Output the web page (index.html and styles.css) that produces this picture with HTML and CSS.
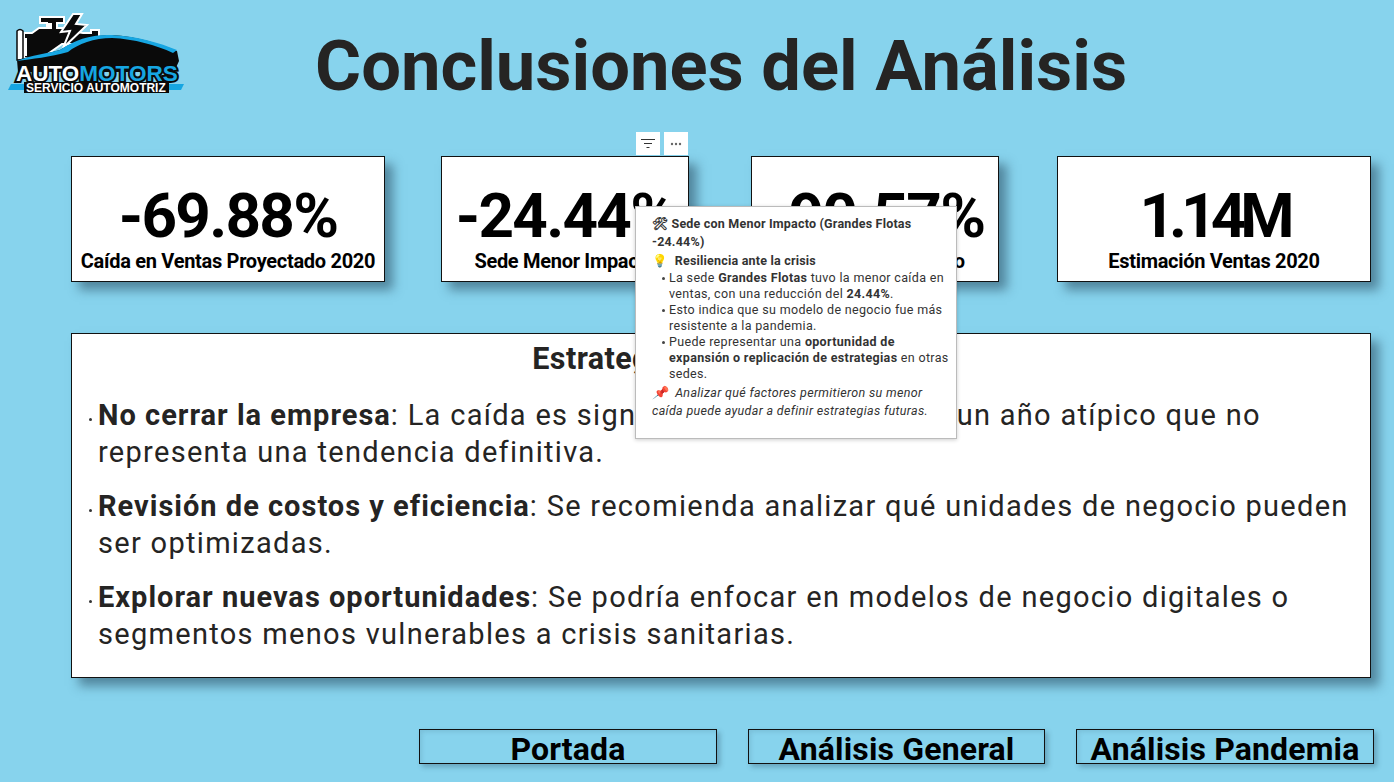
FILE: index.html
```html
<!DOCTYPE html>
<html>
<head>
    <meta charset="UTF-8">
    <title>Conclusiones del Análisis</title>
    <link rel="stylesheet" href="styles.css">
</head>
<body>
<div class="page">
    <header class="top">
        <svg class="logo" viewBox="0 0 200 100" width="200" height="100">
            <!-- engine -->
            <path d="M24 58V33h8l7-5h8v-5h-7v-6h24v6h-7v5h10l4 4h6l6 1h8v-3h8v14H62L42 58z" fill="#0a0a0a" stroke="#fff" stroke-width="2"/>
            <path d="M17 60V31q3-3 6 0v29z" fill="#fff" stroke="#0a0a0a" stroke-width="1.5"/>
            <path d="M47 23h5v6h-5zM24 38h3v18h-3z" fill="#fff"/>
            <path d="M73 14h9l-6 10 11 1-24 23 7-17-9 1z" fill="#0a0a0a" stroke="#fff" stroke-width="2"/>
            <!-- car -->
            <path d="M17 60C34 55 50 53 60 50C76 40 92 35 112 35C136 36 160 44 177 51L179 61L174 72H18z" fill="#0a0a0a"/>
            <path d="M17 61C30 55 50 53 60 50C76 39 92 34 112 35C136 36 160 43 177 50L173 53C156 45 134 39 112 38C94 38 78 44 68 52C50 57 32 59 17 61z" fill="#16a6e2"/>
            <text class="logo-auto" x="16" y="81" stroke="#0a0a0a" stroke-width="4" paint-order="stroke">AUTO<tspan fill="#16a6e2">MOTORS</tspan></text>
            <path d="M8 90l3-6h173l-3 6z" fill="#16a6e2"/>
            <rect x="24" y="82" width="145" height="11" fill="#0a0a0a"/>
            <text class="logo-sub" x="26" y="92">SERVICIO AUTOMOTRIZ</text>
        </svg>
        <h1 class="title">Conclusiones del Análisis</h1>
    </header>

    <section class="kpis">
        <div class="card card-wide">
            <div class="num">-69.88%</div>
            <div class="lbl">Caída en Ventas Proyectado 2020</div>
        </div>
        <div class="card">
            <div class="num">-24.44%</div>
            <div class="lbl">Sede Menor Impacto</div>
        </div>
        <div class="card">
            <div class="num">-90.57%</div>
            <div class="lbl">Sede Mayor Impacto</div>
        </div>
        <div class="card card-wide">
            <div class="num num-tight">1.14M</div>
            <div class="lbl">Estimación Ventas 2020</div>
        </div>
    </section>

    <section class="panel">
        <h2>Estrategias Recomendadas</h2>
        <ul>
            <li><b>No cerrar la empresa</b>: La caída es significativa, pero 2020 es un año atípico que no representa una tendencia definitiva.</li>
            <li><b>Revisión de costos y eficiencia</b>: Se recomienda analizar qué unidades de negocio pueden ser optimizadas.</li>
            <li><b>Explorar nuevas oportunidades</b>: Se podría enfocar en modelos de negocio digitales o segmentos menos vulnerables a crisis sanitarias.</li>
        </ul>
    </section>

    <nav class="nav">
        <div class="btn">Portada</div>
        <div class="btn">Análisis General</div>
        <div class="btn">Análisis Pandemia</div>
    </nav>

    <!-- visual header + tooltip sit over the cards -->
    <div class="vis-tools">
        <span class="tool">
            <svg width="14" height="10" viewBox="0 0 14 10"><path d="M0 .5h14M3 4.5h8M5.5 8.5h3" stroke="#333" fill="none"/></svg>
        </span>
        <span class="tool">
            <svg width="12" height="4" viewBox="0 0 12 4"><circle cx="2" cy="2" r="1.2" fill="#666"/><circle cx="6" cy="2" r="1.2" fill="#666"/><circle cx="10" cy="2" r="1.2" fill="#666"/></svg>
        </span>
    </div>
    <div class="tip">
        <p class="tip-b">🛠 Sede con Menor Impacto (Grandes Flotas -24.44%)</p>
        <p class="tip-b tip-h">💡&nbsp; Resiliencia ante la crisis</p>
        <ul>
            <li>La sede <b>Grandes Flotas</b> tuvo la menor caída en ventas, con una reducción del <b>24.44%</b>.</li>
            <li>Esto indica que su modelo de negocio fue más resistente a la pandemia.</li>
            <li>Puede representar una <b>oportunidad de expansión o replicación de estrategias</b> en otras sedes.</li>
        </ul>
        <p class="tip-i">📌&nbsp; Analizar qué factores permitieron su menor caída puede ayudar a definir estrategias futuras.</p>
    </div>
</div>
</body>
</html>
```

FILE: styles.css
```css
* {
    box-sizing: border-box;
}

body {
    margin: 0;
    background: #87d3ed;
    font-family: Roboto, "Liberation Sans", sans-serif;
    color: #222;
}

.page {
    position: relative;
    width: 1394px;
    height: 782px;
    overflow: hidden;
}

.top {
    display: flex;
    height: 156px;
}

.logo {
    flex: none;
}

.logo-auto {
    font: 700 22.5px "Liberation Sans", sans-serif;
    fill: #fff;
}

.logo-sub {
    font: 700 12px "Liberation Sans", sans-serif;
    fill: #fff;
}

.title {
    margin: 24px 0 0 115px;
    font-size: 70.5px;
    line-height: 84px;
    font-weight: 700;
    color: #252423;
    white-space: nowrap;
}

.kpis {
    display: flex;
    height: 126px;
    margin-left: 71px;
}

.card {
    flex: none;
    width: 248px;
    height: 126px;
    background: #fff;
    border: 1px solid #111;
    box-shadow: 8px 8px 10px rgba(30, 60, 80, 0.5);
    text-align: center;
    color: #000;
}

.card-wide {
    width: 314px;
}

.card:nth-child(1) {
    margin-right: 56px;
}

.card:nth-child(2) {
    margin-right: 62px;
}

.card:nth-child(3) {
    margin-right: 58px;
}

.num {
    margin-top: 23px;
    font-size: 62px;
    line-height: 72px;
    font-weight: 700;
    letter-spacing: -1.7px;
    white-space: nowrap;
}

.num-tight {
    letter-spacing: -6px;
}

.lbl {
    margin-top: -3px;
    font-size: 20px;
    line-height: 24px;
    font-weight: 700;
    letter-spacing: -0.3px;
    white-space: nowrap;
}

.panel {
    width: 1300px;
    height: 345px;
    margin: 51px 0 0 71px;
    padding: 7px 20px 0 26px;
    background: #fff;
    border: 1px solid #111;
    box-shadow: 8px 8px 10px rgba(30, 60, 80, 0.5);
}

.panel h2 {
    margin: 0;
    font-size: 30.5px;
    line-height: 36px;
    font-weight: 700;
    letter-spacing: 0.4px;
    text-align: center;
    color: #252423;
}

.panel ul {
    margin: 20px 0 0;
    padding: 0;
    list-style: none;
}

.panel li {
    position: relative;
    margin-bottom: 18px;
    font-size: 29px;
    line-height: 36.5px;
    letter-spacing: 1.3px;
    color: #252423;
}

.panel li b {
    letter-spacing: 1px;
}

.panel li::before {
    content: "";
    position: absolute;
    left: -9px;
    top: 21px;
    width: 3px;
    height: 3px;
    border-radius: 50%;
    background: #333;
}

.nav {
    display: flex;
    gap: 31px;
    margin: 51px 0 0 419px;
}

.btn {
    width: 298px;
    height: 35px;
    border: 1px solid #111;
    box-shadow: 3px 3px 5px rgba(30, 60, 80, 0.3), inset 2px 2px 4px rgba(30, 60, 80, 0.12);
    text-align: center;
    font-size: 32px;
    line-height: 38px;
    font-weight: 700;
    letter-spacing: 0.15px;
    color: #000;
    white-space: nowrap;
}

.btn:nth-child(2) {
    width: 297px;
}

.vis-tools {
    position: absolute;
    left: 636px;
    top: 132px;
    display: flex;
    gap: 4px;
}

.tool {
    display: flex;
    align-items: center;
    justify-content: center;
    width: 24px;
    height: 23px;
    background: #fff;
}

.tip {
    position: absolute;
    left: 635px;
    top: 206px;
    width: 322px;
    height: 233px;
    padding: 8px 4px 8px 16px;
    background: #fff;
    border: 1px solid #bbb;
    box-shadow: 0 1px 4px rgba(0, 0, 0, 0.2);
    font-size: 12.5px;
    line-height: 16px;
    letter-spacing: 0.33px;
    color: #333;
}

.tip p {
    margin: 0;
}

.tip-b {
    font-weight: 700;
    line-height: 18px;
    letter-spacing: 0.2px;
}

.tip .tip-h {
    margin-top: 1px;
}

.tip ul {
    margin: 0;
    padding: 0 0 0 17px;
    list-style: none;
}

.tip li {
    position: relative;
}

.tip li::before {
    content: "";
    position: absolute;
    left: -7px;
    top: 7px;
    width: 3px;
    height: 3px;
    border-radius: 50%;
    background: #444;
}

.tip .tip-i {
    margin-top: 2px;
    font-style: italic;
    line-height: 18px;
}
```
